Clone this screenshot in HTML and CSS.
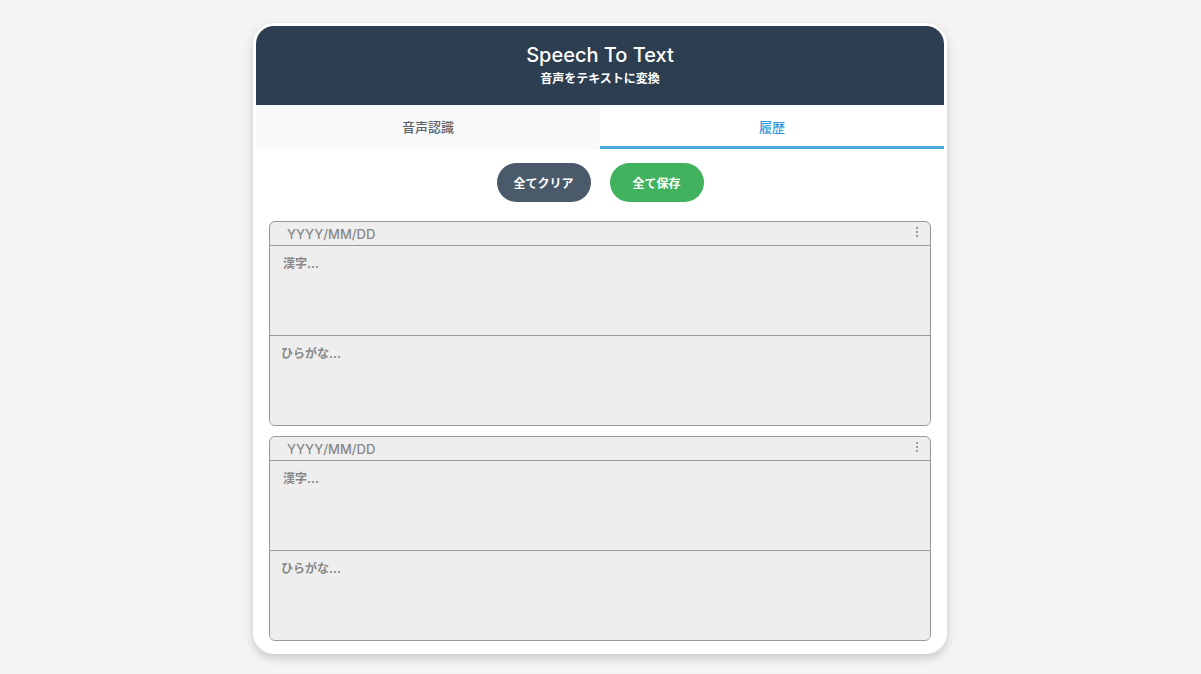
FILE: index.html
```html
<!DOCTYPE html>
<html lang="ja">
<head>
<meta charset="utf-8">
<title>Speech To Text</title>
<link rel="stylesheet" href="styles.css">
</head>
<body>
<div class="app">
  <header class="header">
    <h1 class="title">Speech To Text</h1>
    <p class="subtitle">音声をテキストに変換</p>
  </header>
  <nav class="tabs">
    <div class="tab">音声認識</div>
    <div class="tab active">履歴</div>
  </nav>
  <main class="content">
    <div class="actions">
      <button class="btn btn-clear">全てクリア</button>
      <button class="btn btn-save">全て保存</button>
    </div>
    <div class="entries">
      <div class="entry">
        <div class="entry-head">
          <span class="date">YYYY/MM/DD</span>
          <svg class="kebab" width="4" height="12" viewBox="0 0 4 12"><circle cx="2" cy="2" r="1.1"/><circle cx="2" cy="6" r="1.1"/><circle cx="2" cy="10" r="1.1"/></svg>
        </div>
        <textarea class="field" placeholder="漢字..." readonly></textarea>
        <textarea class="field last" placeholder="ひらがな..." readonly></textarea>
      </div>
      <div class="entry">
        <div class="entry-head">
          <span class="date">YYYY/MM/DD</span>
          <svg class="kebab" width="4" height="12" viewBox="0 0 4 12"><circle cx="2" cy="2" r="1.1"/><circle cx="2" cy="6" r="1.1"/><circle cx="2" cy="10" r="1.1"/></svg>
        </div>
        <textarea class="field" placeholder="漢字..." readonly></textarea>
        <textarea class="field last" placeholder="ひらがな..." readonly></textarea>
      </div>
      <div class="entry entry-peek"></div>
    </div>
  </main>
</div>
</body>
</html>
```

FILE: styles.css
```css
* { box-sizing: border-box; }
html, body { margin: 0; padding: 0; height: 100%; }
body {
  background: #f4f4f4;
  font-family: Inter, "Noto Sans CJK JP", sans-serif;
  overflow: hidden;
}
.app {
  width: 694px;
  height: 631px;
  margin: 23px 0 0 253px;
  border: 3px solid #fff;
  border-radius: 21px;
  background: #fff;
  box-shadow: 0 4px 10px rgba(0,0,0,0.18);
  overflow: hidden;
  display: flex;
  flex-direction: column;
}
.header {
  background: #2c3e50;
  color: #fff;
  height: 79px;
  flex: none;
  display: flex;
  flex-direction: column;
  align-items: center;
  padding-top: 16px;
}
.title {
  margin: 0;
  font-size: 20px;
  font-weight: 500;
  line-height: 26px;
}
.subtitle {
  margin: 3px 0 0;
  font-size: 12px;
  font-weight: 700;
  line-height: 16px;
}
.tabs {
  display: flex;
  flex: none;
  height: 44px;
}
.tab {
  flex: 1;
  display: flex;
  align-items: center;
  justify-content: center;
  background: #f8f9fa;
  color: #5f6368;
  font-size: 13px;
  font-weight: 500;
  border-bottom: 3px solid transparent;
  padding-top: 2px;
}
.tab.active {
  background: #fff;
  color: #3498db;
  border-bottom-color: #4aa8e0;
}
.content {
  flex: 1;
  overflow: hidden;
  padding: 14px 13px 0;
}
.actions {
  display: flex;
  justify-content: center;
  gap: 19px;
  margin-bottom: 19px;
}
.btn {
  height: 39px;
  width: 94px;
  border: none;
  border-radius: 20px;
  color: #fff;
  font-family: Inter, "Noto Sans CJK JP", sans-serif;
  font-size: 12px;
  font-weight: 700;
  padding: 0;
}
.btn-clear { background: #4a5a6b; }
.btn-save { background: #41b35f; }
.entries {
  display: flex;
  flex-direction: column;
  gap: 10px;
}
.entry {
  border: 1px solid #999;
  border-radius: 6px;
  background: #eee;
  display: flex;
  flex-direction: column;
  overflow: hidden;
  flex: none;
}
.entry-peek { height: 40px; }
.entry-head {
  height: 24px;
  display: flex;
  align-items: center;
  justify-content: space-between;
  padding: 1px 11px 0 17px;
  border-bottom: 1px solid #999;
}
.date {
  font-size: 13px;
  color: #888;
  font-weight: 500;
}
.kebab { fill: #888; margin-top: -4px; }
.field {
  display: block;
  width: 100%;
  height: 90px;
  margin: 0;
  border: none;
  border-bottom: 1px solid #999;
  background: #eee;
  resize: none;
  padding: 8px 13px;
  font-family: Inter, "Noto Sans CJK JP", sans-serif;
  font-size: 12px;
  font-weight: 700;
  color: #333;
  outline: none;
}
.field.last { border-bottom: none; height: 89px; padding-left: 11px; }
.field::placeholder { color: #888; opacity: 1; }
```
